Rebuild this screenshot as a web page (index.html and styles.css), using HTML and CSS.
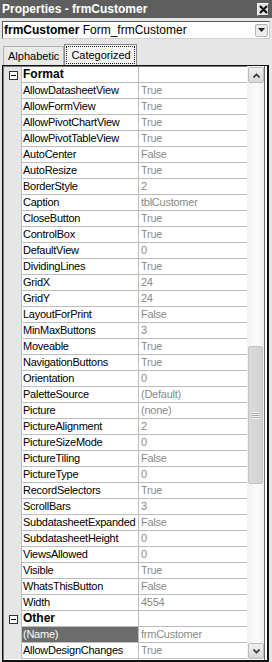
FILE: index.html
```html
<!DOCTYPE html>
<html lang="en">
<head>
    <meta charset="UTF-8" />
    <title>Properties - frmCustomer</title>
    <link rel="stylesheet" href="styles.css">
</head>
<body>
    <div class="window">
        <div class="titlebar">
            <span class="title">Properties - frmCustomer</span>
            <span class="close">
                <svg width="9" height="9" viewBox="0 0 9 9"><path d="M1 1L8 8M8 1L1 8" stroke="#111" stroke-width="2.2"/></svg>
            </span>
        </div>

        <div class="combo">
            <span class="combo-text"><b>frmCustomer</b> Form_frmCustomer</span>
            <span class="combo-btn">
                <svg width="7" height="4" viewBox="0 0 7 4"><path d="M0 0H7L3.5 4Z" fill="#222"/></svg>
            </span>
        </div>

        <div class="tabs">
            <span class="tab">Alphabetic</span>
            <span class="tab active"><span class="focus">Categorized</span></span>
        </div>

        <div class="grid">
            <div class="rows">
                <div class="row cat"><span class="gut"><i class="minus"></i></span><span class="name">Format</span><span class="val"></span></div>
                <div class="row"><span class="gut"></span><span class="name">AllowDatasheetView</span><span class="val">True</span></div>
                <div class="row"><span class="gut"></span><span class="name">AllowFormView</span><span class="val">True</span></div>
                <div class="row"><span class="gut"></span><span class="name">AllowPivotChartView</span><span class="val">True</span></div>
                <div class="row"><span class="gut"></span><span class="name">AllowPivotTableView</span><span class="val">True</span></div>
                <div class="row"><span class="gut"></span><span class="name">AutoCenter</span><span class="val">False</span></div>
                <div class="row"><span class="gut"></span><span class="name">AutoResize</span><span class="val">True</span></div>
                <div class="row"><span class="gut"></span><span class="name">BorderStyle</span><span class="val">2</span></div>
                <div class="row"><span class="gut"></span><span class="name">Caption</span><span class="val">tblCustomer</span></div>
                <div class="row"><span class="gut"></span><span class="name">CloseButton</span><span class="val">True</span></div>
                <div class="row"><span class="gut"></span><span class="name">ControlBox</span><span class="val">True</span></div>
                <div class="row"><span class="gut"></span><span class="name">DefaultView</span><span class="val">0</span></div>
                <div class="row"><span class="gut"></span><span class="name">DividingLines</span><span class="val">True</span></div>
                <div class="row"><span class="gut"></span><span class="name">GridX</span><span class="val">24</span></div>
                <div class="row"><span class="gut"></span><span class="name">GridY</span><span class="val">24</span></div>
                <div class="row"><span class="gut"></span><span class="name">LayoutForPrint</span><span class="val">False</span></div>
                <div class="row"><span class="gut"></span><span class="name">MinMaxButtons</span><span class="val">3</span></div>
                <div class="row"><span class="gut"></span><span class="name">Moveable</span><span class="val">True</span></div>
                <div class="row"><span class="gut"></span><span class="name">NavigationButtons</span><span class="val">True</span></div>
                <div class="row"><span class="gut"></span><span class="name">Orientation</span><span class="val">0</span></div>
                <div class="row"><span class="gut"></span><span class="name">PaletteSource</span><span class="val">(Default)</span></div>
                <div class="row"><span class="gut"></span><span class="name">Picture</span><span class="val">(none)</span></div>
                <div class="row"><span class="gut"></span><span class="name">PictureAlignment</span><span class="val">2</span></div>
                <div class="row"><span class="gut"></span><span class="name">PictureSizeMode</span><span class="val">0</span></div>
                <div class="row"><span class="gut"></span><span class="name">PictureTiling</span><span class="val">False</span></div>
                <div class="row"><span class="gut"></span><span class="name">PictureType</span><span class="val">0</span></div>
                <div class="row"><span class="gut"></span><span class="name">RecordSelectors</span><span class="val">True</span></div>
                <div class="row"><span class="gut"></span><span class="name">ScrollBars</span><span class="val">3</span></div>
                <div class="row"><span class="gut"></span><span class="name">SubdatasheetExpanded</span><span class="val">False</span></div>
                <div class="row"><span class="gut"></span><span class="name">SubdatasheetHeight</span><span class="val">0</span></div>
                <div class="row"><span class="gut"></span><span class="name">ViewsAllowed</span><span class="val">0</span></div>
                <div class="row"><span class="gut"></span><span class="name">Visible</span><span class="val">True</span></div>
                <div class="row"><span class="gut"></span><span class="name">WhatsThisButton</span><span class="val">False</span></div>
                <div class="row"><span class="gut"></span><span class="name">Width</span><span class="val">4554</span></div>
                <div class="row cat"><span class="gut"><i class="minus"></i></span><span class="name">Other</span><span class="val"></span></div>
                <div class="row selected"><span class="gut"></span><span class="name">(Name)</span><span class="val">frmCustomer</span></div>
                <div class="row"><span class="gut"></span><span class="name">AllowDesignChanges</span><span class="val">True</span></div>
            </div>

            <div class="scrollbar">
                <span class="sb-btn">
                    <svg width="7" height="5" viewBox="0 0 7 5"><path d="M0.5 4.5L3.5 1.5L6.5 4.5" fill="none" stroke="#333" stroke-width="1.6"/></svg>
                </span>
                <div class="track">
                    <div class="thumb"><span class="grip"></span></div>
                </div>
                <span class="sb-btn">
                    <svg width="7" height="5" viewBox="0 0 7 5"><path d="M0.5 0.5L3.5 3.5L6.5 0.5" fill="none" stroke="#333" stroke-width="1.6"/></svg>
                </span>
            </div>
        </div>
    </div>
</body>
</html>
```
FILE: styles.css
```css
html, body {
    margin: 0;
    padding: 0;
}

body {
    font-family: "Liberation Sans", Arial, sans-serif;
    font-size: 11px;
    background: #e6e6e6;
}

.window {
    display: flex;
    flex-direction: column;
    width: 272px;
    height: 662px;
    box-sizing: border-box;
    background: #e6e6e6;
}

/* title bar */
.titlebar {
    display: flex;
    align-items: center;
    height: 18px;
    background: #5e5e5e;
    color: #fff;
}

.title {
    padding-left: 2px;
    font-weight: bold;
    font-size: 12px;
}

.close {
    display: flex;
    align-items: center;
    justify-content: center;
    width: 12px;
    height: 13px;
    margin-left: auto;
    margin-right: 3px;
    background: #e4e4e4;
    border: 1px solid #f4f4f4;
    border-right-color: #555;
    border-bottom-color: #555;
    box-sizing: border-box;
}

/* object combo */
.combo {
    display: flex;
    align-items: center;
    height: 18px;
    margin: 3px 2px 0 2px;
    background: #fff;
    border: 1px solid #5a5a5a;
    border-right-color: #d0d0d0;
    border-bottom-color: #d0d0d0;
    box-sizing: border-box;
}

.combo-text {
    padding-left: 1px;
    font-size: 12px;
    white-space: nowrap;
}

.combo-btn {
    display: flex;
    align-items: center;
    justify-content: center;
    width: 13px;
    height: 13px;
    margin-left: auto;
    margin-right: 1px;
    background: #ececec;
    border: 1px solid #b4b4b4;
    border-radius: 2px;
    box-sizing: border-box;
}

/* tabs */
.tabs {
    display: flex;
    align-items: flex-end;
    height: 23px;
    margin-top: 3px;
    padding-left: 3px;
}

.tab {
    height: 19px;
    padding: 0 4px;
    line-height: 18px;
    font-size: 11px;
    background: #e9e9e9;
    border: 1px solid #b0b0b0;
    border-bottom: none;
    box-sizing: border-box;
}

.tab.active {
    height: 21px;
    padding: 1px 1px 0 1px;
    background: #f4f4f4;
    border-color: #888;
}

.focus {
    display: block;
    height: 18px;
    padding: 0 3px 0 4px;
    line-height: 17px;
    border: 1px dotted #222;
    box-sizing: border-box;
}

/* property grid */
.grid {
    flex: 1;
    display: flex;
    margin: 0 3px 0 2px;
    background: #fff;
    border: 1px solid #111;
    border-right-width: 2px;
    border-bottom-width: 2px;
    padding-right: 2px;
}

.rows {
    flex: 1;
    display: flex;
    flex-direction: column;
    overflow: hidden;
    border: 1px solid #7a7a7a;
    border-right: none;
    border-bottom: none;
}

.row {
    display: grid;
    grid-template-columns: 18px 117px 1fr;
    height: 16px;
    flex: none;
    line-height: 15px;
    letter-spacing: -0.25px;
}

.gut {
    position: relative;
    background: #e6e6e6;
    border-right: 1px solid #bdbdbd;
}

.name {
    padding-left: 1px;
    color: #000;
    white-space: nowrap;
    overflow: hidden;
    border-right: 1px solid #bdbdbd;
    border-bottom: 1px solid #bdbdbd;
}

.val {
    padding-left: 2px;
    color: #8a8a8a;
    white-space: nowrap;
    overflow: hidden;
    border-bottom: 1px solid #bdbdbd;
}

.cat .name {
    font-weight: bold;
    font-size: 12px;
    letter-spacing: 0;
}

.minus {
    position: absolute;
    left: 5px;
    top: 4px;
    width: 9px;
    height: 9px;
    box-sizing: border-box;
    background: #fff;
    border: 1px solid #333;
}

.minus::after {
    content: "";
    position: absolute;
    left: 1px;
    top: 3px;
    width: 5px;
    height: 1px;
    background: #000;
}

.selected .name {
    background: #6c6c6c;
    color: #fff;
}

/* scroll bar */
.scrollbar {
    display: flex;
    flex-direction: column;
    width: 16px;
    padding: 1px 0 1px 1px;
    background: linear-gradient(to right, #f2f2f2, #fbfbfb 60%, #f0f0f0);
    border-right: 1px solid #6a6a6a;
}

.sb-btn {
    display: flex;
    align-items: center;
    justify-content: center;
    height: 16px;
    flex: none;
    background: linear-gradient(#f0f0f0, #d8d8d8);
    border: 1px solid #bcbcbc;
    border-radius: 2px;
    box-sizing: border-box;
}

.track {
    flex: 1;
    display: flex;
    flex-direction: column;
}

.thumb {
    display: flex;
    align-items: center;
    justify-content: center;
    height: 138px;
    margin-top: 263px;
    margin-right: 1px;
    background: linear-gradient(to right, #dadada, #d2d2d2);
    border: 1px solid #c4c4c4;
    border-radius: 2px;
    box-sizing: border-box;
}

.grip {
    width: 7px;
    height: 7px;
    background: repeating-linear-gradient(#f6f6f6 0, #f6f6f6 1px, #a8a8a8 1px, #a8a8a8 2px);
}
```
